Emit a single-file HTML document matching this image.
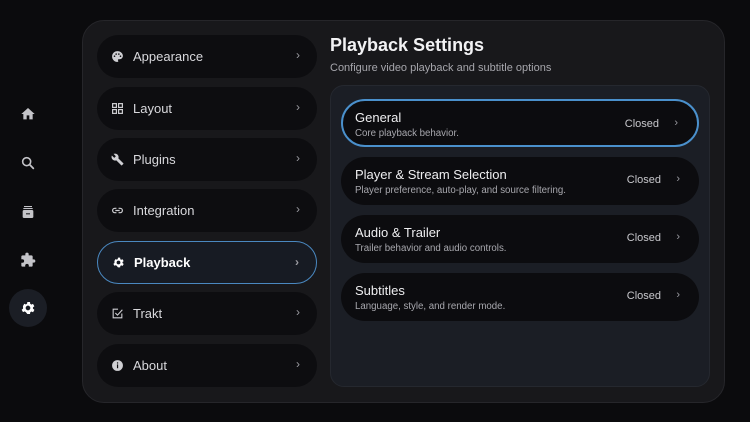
<!DOCTYPE html>
<html><head><meta charset="utf-8"><style>
*{box-sizing:border-box;margin:0;padding:0}
body{width:750px;height:422px;background:#0b0b0d;font-family:"Liberation Sans",sans-serif;position:relative;overflow:hidden;color:#e6e6e8}
.sb{position:absolute;left:20px;width:16px;height:16px}
.act{position:absolute;left:9px;top:289px;width:38px;height:38px;border-radius:50%;background:#1b1e25}
.panel{position:absolute;left:82px;top:20px;width:643px;height:383px;border-radius:22px;background:#18181b;border:1px solid #26262a}
.item{position:absolute;left:97px;width:220px;height:43px;border-radius:22px;background:#0d0d10;display:flex;align-items:center;padding-left:14px;font-size:13px;color:#d8d8dc}
.item svg{width:13px;height:13px;margin-right:9px}
.item .ch{position:absolute;right:17px;top:13px;color:#9a9aa0;font-size:12px}
.item.sel{background:#171b23;border:1px solid #4a88c0;color:#fff;font-weight:bold}
h1{position:absolute;left:330px;top:35px;font-size:18px;font-weight:bold;color:#f2f2f4}
.sub{position:absolute;left:330px;top:62px;font-size:11px;color:#a6a6ac}
.inner{position:absolute;left:330px;top:85px;width:380px;height:302px;border-radius:14px;background:#1b1e25;border:1px solid #25282f}
.row{position:absolute;left:341px;width:358px;height:48px;border-radius:24px;background:#0c0c0f;padding:10px 0 0 14px}
.row.sel{border:2px solid #4a90cc;padding:9px 0 0 12px}
.row .t{font-size:13px;color:#eeeef0}
.row .d{font-size:9.7px;color:#a8a8ae;margin-top:3px}
.row .c{position:absolute;right:38px;top:17px;font-size:11px;color:#c8c8cc}
.row .a{position:absolute;right:19px;top:16px;font-size:11px;color:#9a9aa0}
</style></head><body>
<svg class="sb" style="top:106px" viewBox="0 0 24 24"><path d="M10 20v-6h4v6h5v-8h3L12 3 2 12h3v8z" fill="#c4c4c8"/></svg>
<svg class="sb" style="top:155px" viewBox="0 0 24 24"><circle cx="10" cy="10" r="6" fill="none" stroke="#c4c4c8" stroke-width="2.4"/><path d="M14.5 14.5L20 20" stroke="#c4c4c8" stroke-width="2.6" stroke-linecap="round"/></svg>
<svg class="sb" style="top:204px" viewBox="0 0 24 24"><rect x="6" y="3" width="12" height="1.6" fill="#c4c4c8"/><rect x="5" y="6" width="14" height="1.6" fill="#c4c4c8"/><rect x="4" y="9" width="16" height="12" rx="2" fill="#c4c4c8"/><rect x="9" y="14" width="6" height="1.5" fill="#0b0b0d"/></svg>
<svg class="sb" style="top:252px" viewBox="0 0 24 24"><path d="M20.5 11H19V7a2 2 0 0 0-2-2h-4V3.5a2.5 2.5 0 0 0-5 0V5H4a2 2 0 0 0-2 2v3.8h1.5a2.7 2.7 0 0 1 0 5.4H2V20a2 2 0 0 0 2 2h3.8v-1.5a2.7 2.7 0 0 1 5.4 0V22H17a2 2 0 0 0 2-2v-4h1.5a2.5 2.5 0 0 0 0-5z" fill="#c4c4c8"/></svg>
<div class="act"></div>
<svg class="sb" style="top:300px" viewBox="0 0 24 24"><path d="M19.4 13a7.5 7.5 0 0 0 0-2l2.1-1.6-2-3.5-2.5 1a7 7 0 0 0-1.7-1L15 3h-4l-.4 2.7a7 7 0 0 0-1.7 1l-2.5-1-2 3.5L4.6 11a7.5 7.5 0 0 0 0 2l-2.1 1.6 2 3.5 2.5-1a7 7 0 0 0 1.7 1L11 21h4l.4-2.7a7 7 0 0 0 1.7-1l2.5 1 2-3.5zM12 15.5A3.5 3.5 0 1 1 12 8.5a3.5 3.5 0 0 1 0 7z" fill="#fff"/></svg>
<div class="panel"></div>
<div class="item" style="top:35px"><svg viewBox="0 0 24 24"><path d="M12 2a10 10 0 0 0 0 20c1 0 1.5-.7 1.5-1.5 0-.4-.2-.8-.4-1-.3-.3-.4-.6-.4-1 0-.8.7-1.5 1.5-1.5H16a6 6 0 0 0 6-6c0-4.9-4.5-9-10-9zM6.5 13a1.5 1.5 0 1 1 0-3 1.5 1.5 0 0 1 0 3zm3-4a1.5 1.5 0 1 1 0-3 1.5 1.5 0 0 1 0 3zm5 0a1.5 1.5 0 1 1 0-3 1.5 1.5 0 0 1 0 3zm3 4a1.5 1.5 0 1 1 0-3 1.5 1.5 0 0 1 0 3z" fill="#cfcfd3"/></svg>Appearance<span class="ch">›</span></div>
<div class="item" style="top:87px"><svg viewBox="0 0 24 24" fill="none" stroke="#cfcfd3" stroke-width="2.2"><rect x="3" y="3" width="7" height="7"/><rect x="14" y="3" width="7" height="7"/><rect x="3" y="14" width="7" height="7"/><rect x="14" y="14" width="7" height="7"/></svg>Layout<span class="ch">›</span></div>
<div class="item" style="top:138px"><svg viewBox="0 0 24 24"><path d="M22.7 19l-9.1-9.1c.9-2.3.4-5-1.5-6.9-2-2-5-2.4-7.4-1.3L9 6 6 9 1.6 4.7C.4 7.1.9 10.1 2.9 12.1c1.9 1.9 4.6 2.4 6.9 1.5l9.1 9.1c.4.4 1 .4 1.4 0l2.3-2.3c.5-.4.5-1.1.1-1.4z" fill="#cfcfd3"/></svg>Plugins<span class="ch">›</span></div>
<div class="item" style="top:189px"><svg viewBox="0 0 24 24" fill="none" stroke="#cfcfd3" stroke-width="2.2"><path d="M10 8H7a4 4 0 0 0 0 8h3M14 8h3a4 4 0 0 1 0 8h-3M8 12h8"/></svg>Integration<span class="ch">›</span></div>
<div class="item sel" style="top:241px"><svg viewBox="0 0 24 24"><path d="M19.4 13a7.5 7.5 0 0 0 0-2l2.1-1.6-2-3.5-2.5 1a7 7 0 0 0-1.7-1L15 3h-4l-.4 2.7a7 7 0 0 0-1.7 1l-2.5-1-2 3.5L4.6 11a7.5 7.5 0 0 0 0 2l-2.1 1.6 2 3.5 2.5-1a7 7 0 0 0 1.7 1L11 21h4l.4-2.7a7 7 0 0 0 1.7-1l2.5 1 2-3.5zM12 15.5A3.5 3.5 0 1 1 12 8.5a3.5 3.5 0 0 1 0 7z" fill="#fff"/></svg>Playback<span class="ch">›</span></div>
<div class="item" style="top:292px"><svg viewBox="0 0 24 24" fill="none" stroke="#cfcfd3" stroke-width="2"><path d="M20 12v8H4V4h9"/><path d="M8 11l4 4 9-10"/></svg>Trakt<span class="ch">›</span></div>
<div class="item" style="top:344px"><svg viewBox="0 0 24 24"><circle cx="12" cy="12" r="10" fill="#cfcfd3"/><rect x="11" y="10" width="2.2" height="7" fill="#0d0d10"/><circle cx="12.1" cy="7.3" r="1.3" fill="#0d0d10"/></svg>About<span class="ch">›</span></div>
<h1>Playback Settings</h1>
<div class="sub">Configure video playback and subtitle options</div>
<div class="inner"></div>
<div class="row sel" style="top:99px"><div class="t">General</div><div class="d">Core playback behavior.</div><span class="c">Closed</span><span class="a">›</span></div>
<div class="row" style="top:157px"><div class="t">Player &amp; Stream Selection</div><div class="d">Player preference, auto-play, and source filtering.</div><span class="c">Closed</span><span class="a">›</span></div>
<div class="row" style="top:215px"><div class="t">Audio &amp; Trailer</div><div class="d">Trailer behavior and audio controls.</div><span class="c">Closed</span><span class="a">›</span></div>
<div class="row" style="top:273px"><div class="t">Subtitles</div><div class="d">Language, style, and render mode.</div><span class="c">Closed</span><span class="a">›</span></div>
</body></html>
